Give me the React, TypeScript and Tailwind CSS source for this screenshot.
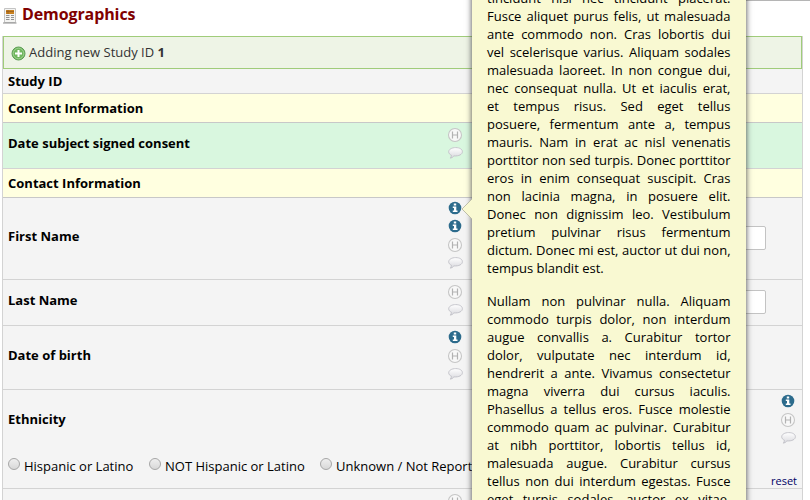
import React from "react";

const first = [
  "tincidunt nisl nec tincidunt placerat.",
  "Fusce aliquet purus felis, ut malesuada",
  "ante commodo non. Cras lobortis dui",
  "vel scelerisque varius. Aliquam sodales",
  "malesuada laoreet. In non congue dui,",
  "nec consequat nulla. Ut et iaculis erat,",
  "et tempus risus. Sed eget tellus",
  "posuere, fermentum ante a, tempus",
  "mauris. Nam in erat ac nisl venenatis",
  "porttitor non sed turpis. Donec porttitor",
  "eros in enim consequat suscipit. Cras",
  "non lacinia magna, in posuere elit.",
  "Donec non dignissim leo. Vestibulum",
  "pretium pulvinar risus fermentum",
  "dictum. Donec mi est, auctor ut dui non,",
];
const second = [
  "Nullam non pulvinar nulla. Aliquam",
  "commodo turpis dolor, non interdum",
  "augue convallis a. Curabitur tortor",
  "dolor, vulputate nec interdum id,",
  "hendrerit a ante. Vivamus consectetur",
  "magna viverra dui cursus iaculis.",
  "Phasellus a tellus eros. Fusce molestie",
  "commodo quam ac pulvinar. Curabitur",
  "at nibh porttitor, lobortis tellus id,",
  "malesuada augue. Curabitur cursus",
  "tellus non dui interdum egestas. Fusce",
  "eget turpis sodales, auctor ex vitae,",
];

function Info() {
  return (
    <svg width="14" height="14" viewBox="0 0 14 14" className="block shrink-0">
      <circle cx="7" cy="7" r="6.3" fill="#2c6b8c" />
      <path d="M5.800 2.600h2.400v2H5.800zM4.800 5.600h3.500v4h1.200v1.400H4.800V9.600H6V7H4.800z" fill="#fff" />
    </svg>
  );
}

function History() {
  return (
    <svg width="16" height="16" viewBox="0 0 16 16" className="block shrink-0">
      <circle cx="8" cy="8" r="6.500" fill="#f8f8f8" stroke="#c6c6c6" strokeWidth="1.100" />
      <path d="M5.500 4.500v7M10.500 4.500v7M5.500 8h5" fill="none" stroke="#b2b2b2" strokeWidth="1.200" />
    </svg>
  );
}

function Balloon() {
  return (
    <svg width="16" height="16" viewBox="0 0 16 16" className="block shrink-0">
      <defs>
        <linearGradient id="balloon" x1="0" y1="0" x2="0" y2="1">
          <stop offset="0" stopColor="#ffffff" />
          <stop offset="1" stopColor="#d8d8dd" />
        </linearGradient>
      </defs>
      <path
        d="M8.700 2.600C4.800 2.600 1.700 4.300 1.700 6.800c0 1.500 1 2.700 2.700 3.400-.1 1.200-.4 2.100-1 3 1.600-.4 2.700-1.200 3.500-2.300 5 .4 8.500-1.500 8.500-4.200C15.400 4.200 12.600 2.600 8.700 2.600z"
        fill="url(#balloon)"
        stroke="#c0c0c6"
        strokeWidth=".9"
      />
    </svg>
  );
}

function Icons({ infos = 0, className = "" }: { infos?: number; className?: string }) {
  return (
    <div className={`flex w-4 flex-col items-center ${className}`}>
      {Array.from({ length: infos }, (_, i) => (
        <div key={i} className="h-[18px] pr-px">
          <Info />
        </div>
      ))}
      <div className="h-[18px]">
        <History />
      </div>
      <Balloon />
    </div>
  );
}

function Radio({ label }: { label: string }) {
  return (
    <label className="flex whitespace-nowrap">
      <span className="mr-[5px] h-3 w-3 rounded-full border border-[#a6a6a6] bg-linear-to-b from-[#efefef] to-[#d8d8d8]" />
      <span className="-ml-px pt-px leading-[14px]">{label}</span>
    </label>
  );
}

function Lines({ lines }: { lines: string[] }) {
  return (
    <>
      {lines.map((line) => (
        <div key={line} className="h-[18px] whitespace-nowrap [text-align-last:justify]">
          {line}
        </div>
      ))}
    </>
  );
}

function Row({ h, label, children }: { h: string; label: string; children?: React.ReactNode }) {
  return (
    <div className={`flex shrink-0 items-center border-b pl-[5px] ${h}`}>
      <b className="w-[439px] font-bold">{label}</b>
      {children}
    </div>
  );
}

export default function App() {
  return (
    <div className="relative h-[500px] w-[810px] overflow-hidden bg-white font-['Open_Sans',sans-serif] text-[13px] leading-[18px] text-black">
      <header className="flex h-9 items-start pl-[3px]">
        <svg width="14" height="17" viewBox="0 0 14 17" className="mt-[7px]">
          <path d="M1.500 1.500h11v14h-11z" fill="#f4f4f2" stroke="#c4c4c4" />
          <path d="M0 16h13.500" stroke="#8c8c8c" />
          <path d="M3 3h8v4H3z" fill="#c9811f" />
          <path d="M3 4.500h8M5 3v4" stroke="#8f5a20" strokeWidth=".7" />
          <path d="M3 8.500h3.500M8 8.500h3M3 10.500h3.500M8 10.500h3M3 12.500h3.500M8 12.500h3" stroke="#929292" />
        </svg>
        <h1 className="ml-[5px] mt-[4px] text-[16px] font-bold leading-5 tracking-[-0.1px] text-[#800000]">Demographics</h1>
        <div className="ml-auto h-px w-[70px] bg-[#b5b5b5]" />
      </header>
      <main className="ml-[2px] flex h-[464px] w-[801px] flex-col overflow-hidden border-x border-[#d3d3d3] bg-[#f4f4f4]">
        <div className="flex h-[33px] shrink-0 items-center border border-[#a0cc7a] bg-[#eef4e6] pb-px pl-[7px] text-[#333]">
          <svg width="15" height="15" viewBox="0 0 15 15" className="mt-[3px]">
            <circle cx="7.500" cy="7.500" r="6.500" fill="#70b65f" stroke="#5c9c55" />
            <circle cx="7.500" cy="7.500" r="5.300" fill="none" stroke="#a7d899" strokeWidth=".8" />
            <path d="M7.500 4v7M4 7.500h7" stroke="#fff" strokeWidth="2" />
          </svg>
          <span className="ml-[3px]">Adding new Study ID <b>1</b></span>
        </div>
        <Row h="h-[25px] border-[#d3d3d3]" label="Study ID" />
        <Row h="h-[29px] border-[#c8c8c8] bg-[#ffffe0]" label="Consent Information" />
        <Row h="h-[46px] border-[#d3d3d3] bg-[#d9f7df] pb-[5px]" label="Date subject signed consent">
          <Icons className="pt-px" />
        </Row>
        <Row h="h-[29px] border-[#c8c8c8] bg-[#ffffe0]" label="Contact Information" />
        <Row h="h-[82px] border-[#d3d3d3] pb-[5px]" label="First Name">
          <Icons infos={2} />
          <div className="ml-[101px] mt-[3px] h-6 w-[202px] rounded-xs border border-[#c3c3c3] bg-white" />
        </Row>
        <Row h="h-[46px] border-[#d3d3d3] pb-[5px]" label="Last Name">
          <Icons className="pt-[2px]" />
          <div className="ml-[101px] mt-[3px] h-6 w-[202px] rounded-xs border border-[#c3c3c3] bg-white" />
        </Row>
        <Row h="h-[64px] border-[#d3d3d3] pb-[5px]" label="Date of birth">
          <Icons infos={1} className="pt-px" />
        </Row>
        <section className="h-[99px] shrink-0 border-b border-[#d3d3d3] pl-[5px]">
          <div className="flex h-[68px]">
            <b className="pt-5">Ethnicity</b>
            <Icons infos={1} className="ml-auto mr-[6px] pt-[4px]" />
          </div>
          <div className="flex h-6">
            <div className="flex w-[141px]"><Radio label="Hispanic or Latino" /></div>
            <div className="flex w-[171px]"><Radio label="NOT Hispanic or Latino" /></div>
            <Radio label="Unknown / Not Reported" />
            <span className="ml-auto mr-[5px] pt-[15px] text-[11px] leading-4 text-[#000066]">reset</span>
          </div>
        </section>
        <div className="flex pl-[444px] pt-1"><Icons /></div>
      </main>
      <aside className="absolute left-[472px] top-[-20px] h-[540px] w-[274px] bg-[#f9f9d2] pl-[15px] pr-[15.500px] pt-[9px] shadow-[0_0_6px_#444]">
        <Lines lines={first} />
        <div className="mb-[15px] h-[18px]">tempus blandit est.</div>
        <Lines lines={second} />
      </aside>
      <svg width="12" height="22" viewBox="0 0 12 22" className="absolute left-[461px] top-[198px]">
        <path d="M12 0 1 11l11 11z" fill="#f9f9d2" />
        <path d="M11 1 1 11l10 10" fill="none" stroke="#bdbda8" />
      </svg>
    </div>
  );
}
